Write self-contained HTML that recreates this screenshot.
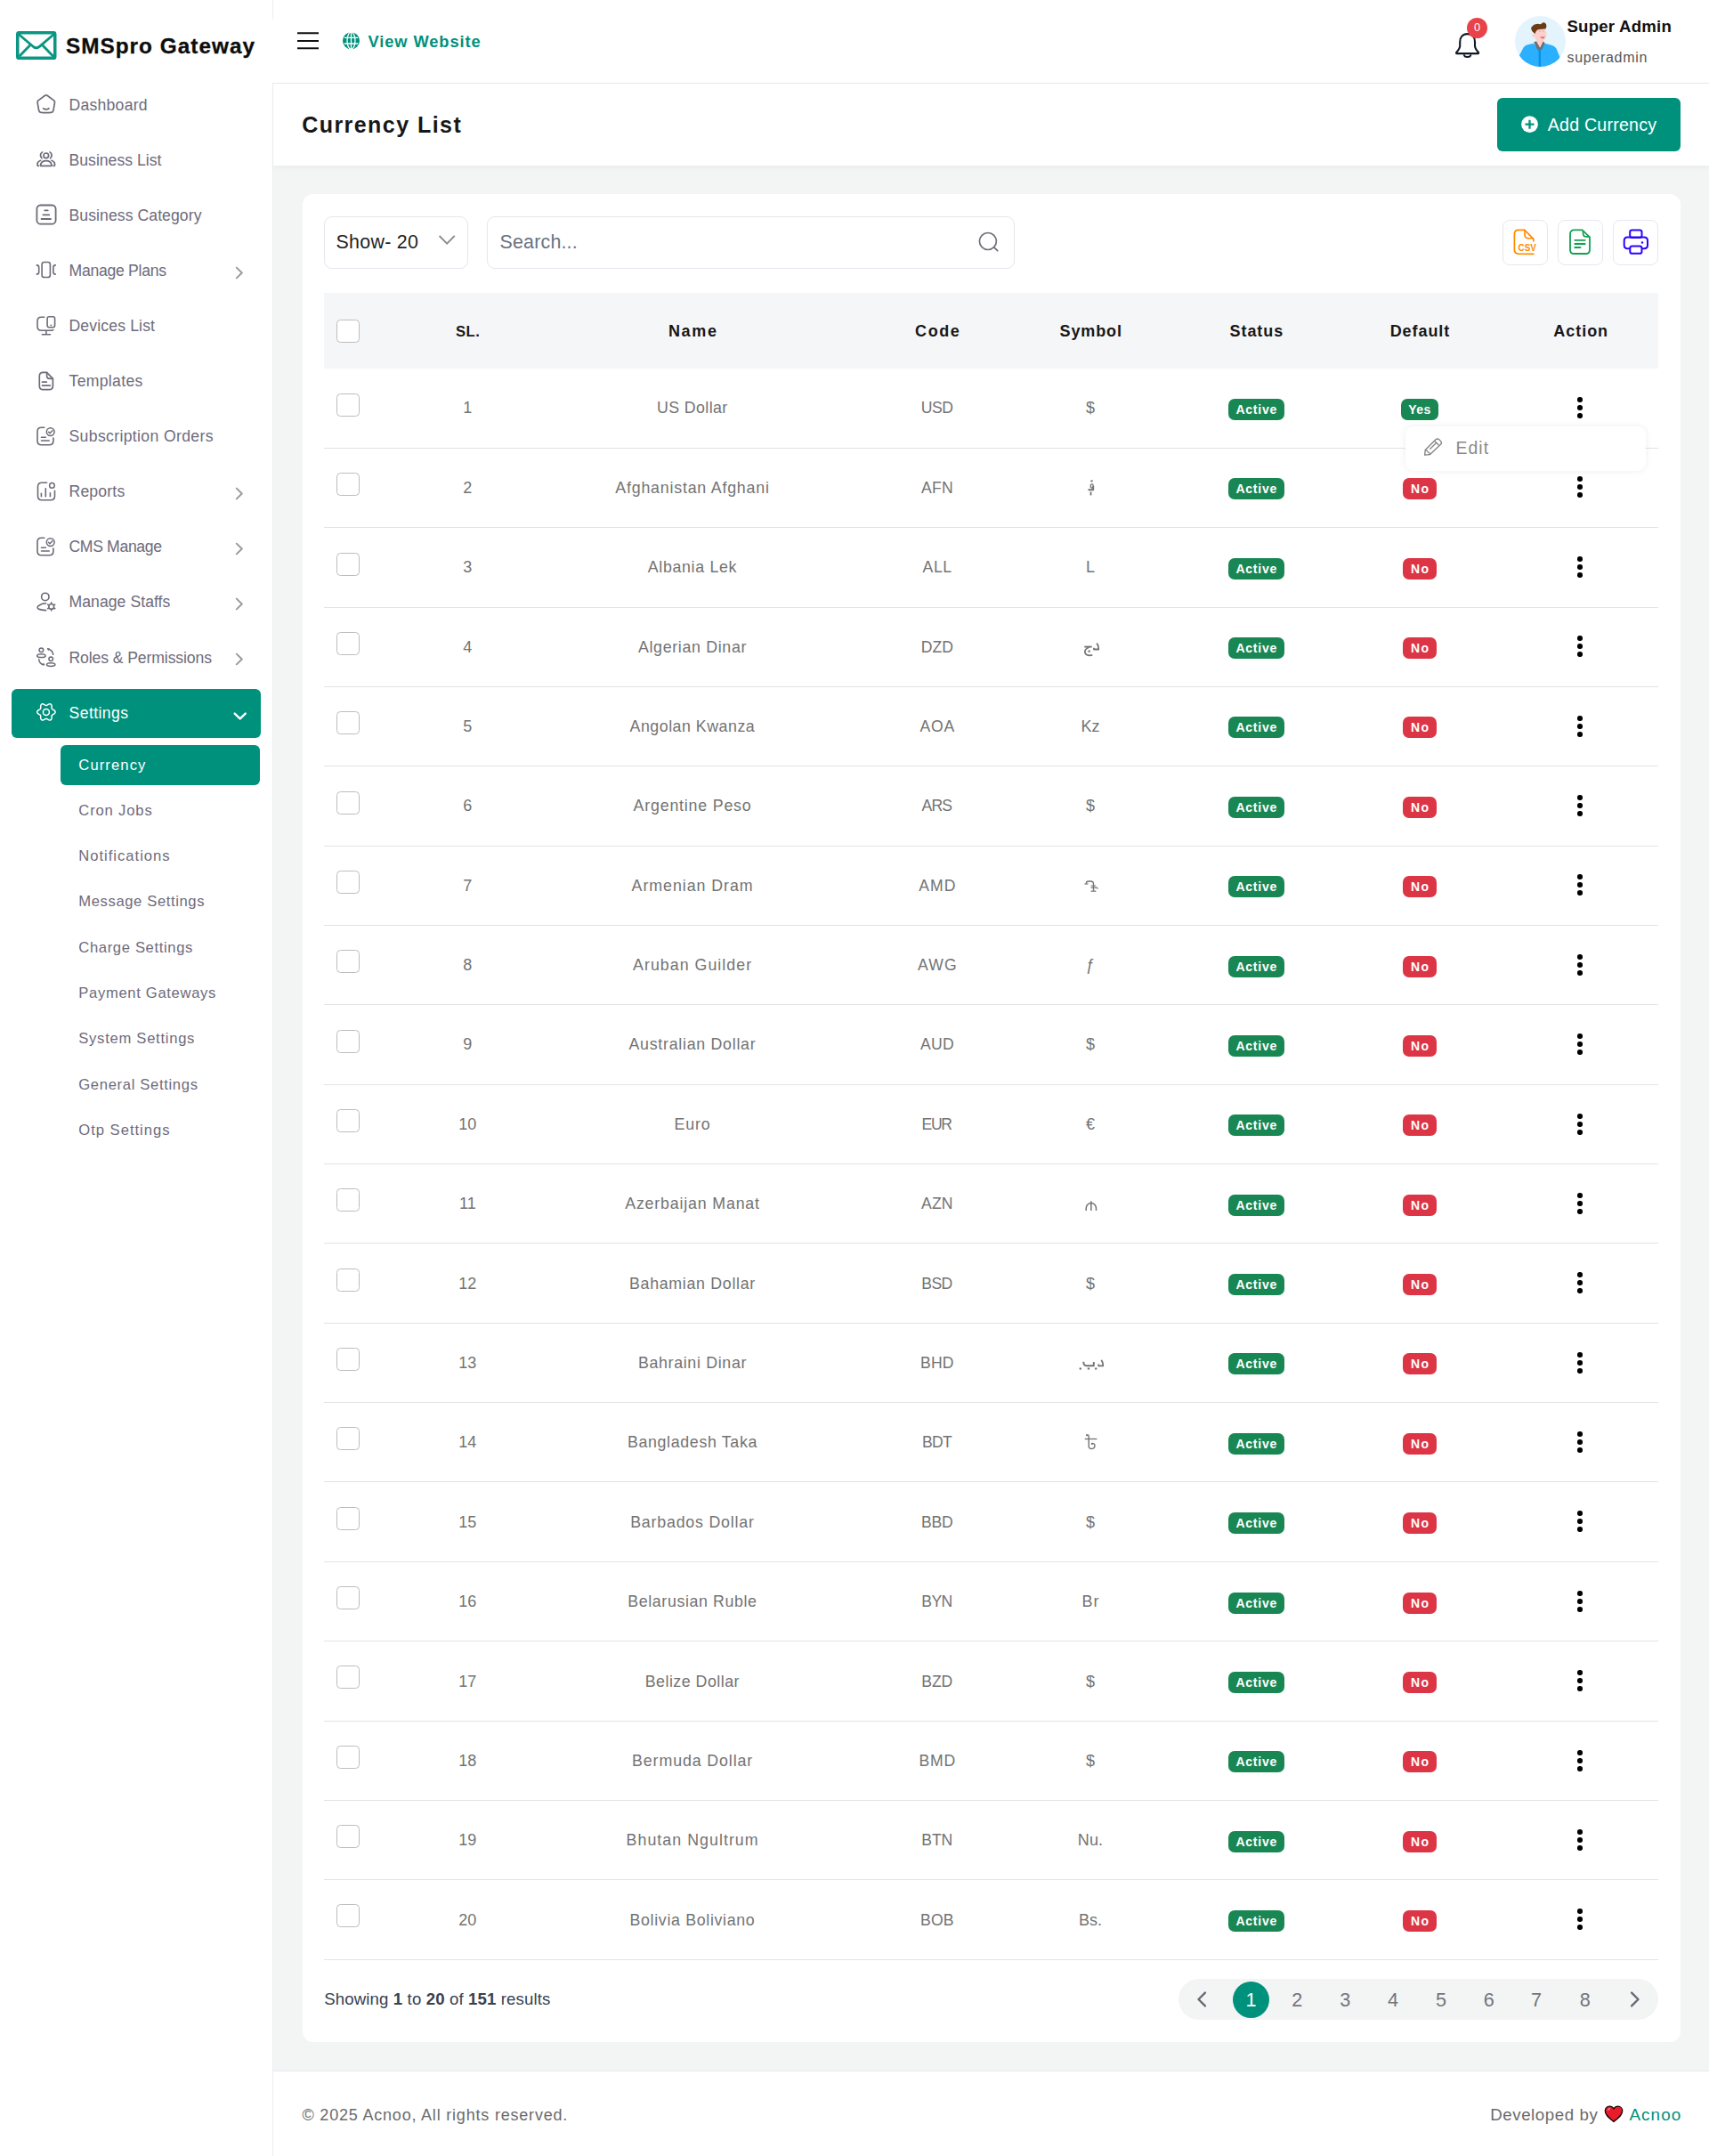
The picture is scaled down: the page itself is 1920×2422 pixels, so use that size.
<!DOCTYPE html>
<html lang="en"><head><meta charset="utf-8"><title>Currency List</title>
<style>
*{box-sizing:border-box;margin:0;padding:0}
html,body{width:1920px;height:2422px;overflow:hidden}
body{position:relative;background:#f3f5f4;font-family:"Liberation Sans",sans-serif;color:#737373;font-size:18px}
.b,.t,.cb,.dots,svg{position:absolute;display:block}
.t{white-space:nowrap}
.cb{border:1px solid #bdbdbd;border-radius:4.5px;background:#fff}
.dots{border-radius:50%;background:#000;box-shadow:0 9px 0 #000,0 18px 0 #000}

</style></head>
<body>
<div class="b" style="left:0px;top:0px;width:307px;height:2422px;background:#fff;border-right:1px solid #eceef3"></div><div class="b" style="left:306px;top:22px;width:1614px;height:72px;background:#fff;border-bottom:1px solid #e6e8ee"></div><div class="b" style="left:307px;top:0px;width:1613px;height:22px;background:#fff"></div><div class="b" style="left:307px;top:94px;width:1613px;height:92px;background:#fff;box-shadow:0 3px 5px rgba(0,0,0,0.035)"></div><div class="b" style="left:340px;top:218px;width:1548px;height:2076px;background:#fff;border-radius:12px"></div><div class="b" style="left:307px;top:2326px;width:1613px;height:96px;background:#fff;border-top:1px solid #e6e8ee"></div>
<svg style="left:18px;top:35px" width="46" height="33" viewBox="0 0 46 33" fill="none" ><rect x="1.75" y="1.75" width="42" height="28.5" rx="1.6" stroke="#0b9683" stroke-width="3.5"/><path d="M3 3.5 L19.5 17.5 Q22.7 20 26 17.5 L42.5 3.5 M3.5 28.5 L16.5 15 M42 28.5 L29 15" stroke="#0b9683" stroke-width="2.9"/></svg><span class="t" style="left:73.9px;top:34.5px;font-size:24.3px;line-height:34px;letter-spacing:1.05px;font-weight:bold;color:#0d0d0d;-webkit-text-stroke:0.3px #0d0d0d;">SMSpro Gateway</span><svg style="left:40px;top:105px" width="24" height="24" viewBox="0 0 24 24" fill="none" ><path d="M10.6 2.3 Q11.8 1.4 13 2.3 L20.6 7.9 Q21.7 8.8 21.5 10.1 L19.9 19.3 Q19.5 21.2 17.5 21.3 Q11.8 21.8 6.1 21.3 Q4.1 21.2 3.7 19.3 L2.1 10.1 Q1.9 8.8 3 7.9 Z" stroke="#6d6b77" stroke-width="1.7" stroke-linecap="round" stroke-linejoin="round" /><path d="M8.6 16.8 Q11.8 19.1 15 16.8" stroke="#6d6b77" stroke-width="1.7" stroke-linecap="round" stroke-linejoin="round" /></svg><span class="t" style="left:77.5px;top:105.6px;font-size:17.6px;line-height:25px;letter-spacing:0.25px;color:#6e6b7b;">Dashboard</span>
<svg style="left:40px;top:166px" width="24" height="24" viewBox="0 0 24 24" fill="none" ><circle cx="11.8" cy="8.8" r="2.8" stroke="#6d6b77" stroke-width="1.7"/><path d="M6.5 20.4 Q5.3 20.4 5.5 19.2 Q6.6 14.6 11.8 14.6 Q17 14.6 18.1 19.2 Q18.300 20.4 17.1 20.4 Z" stroke="#6d6b77" stroke-width="1.7" stroke-linecap="round" stroke-linejoin="round" /><path d="M7.6 4.9 Q3.6 7.6 7 11.8" stroke="#6d6b77" stroke-width="1.7" stroke-linecap="round" stroke-linejoin="round" /><path d="M16 4.9 Q20 7.6 16.6 11.8" stroke="#6d6b77" stroke-width="1.7" stroke-linecap="round" stroke-linejoin="round" /><path d="M5.6 14.3 Q1.4 16 2.1 19.6 Q2.4 20.4 3.400 20.3" stroke="#6d6b77" stroke-width="1.7" stroke-linecap="round" stroke-linejoin="round" /><path d="M18 14.3 Q22.2 16 21.5 19.6 Q21.2 20.4 20.200 20.3" stroke="#6d6b77" stroke-width="1.7" stroke-linecap="round" stroke-linejoin="round" /></svg><span class="t" style="left:77.5px;top:167.7px;font-size:17.6px;line-height:25px;letter-spacing:0.02px;color:#6e6b7b;">Business List</span>
<svg style="left:40px;top:228.6px" width="24" height="24" viewBox="0 0 24 24" fill="none" ><rect x="1.4" y="1.5" width="21.2" height="21.200" rx="4.3" stroke="#6d6b77" stroke-width="1.8"/><path d="M10.3 7.4 H13.7" stroke="#6d6b77" stroke-width="1.8" stroke-linecap="round" stroke-linejoin="round" /><path d="M8.4 12.3 H15.3" stroke="#6d6b77" stroke-width="1.8" stroke-linecap="round" stroke-linejoin="round" /><path d="M6.5 17 H17" stroke="#6d6b77" stroke-width="1.8" stroke-linecap="round" stroke-linejoin="round" /></svg><span class="t" style="left:77.5px;top:229.8px;font-size:17.6px;line-height:25px;letter-spacing:0.08px;color:#6e6b7b;">Business Category</span>
<svg style="left:40px;top:290.5px" width="24" height="24" viewBox="0 0 24 24" fill="none" ><rect x="7.1" y="3.5" width="9.3" height="17" rx="2.6" stroke="#6d6b77" stroke-width="1.6"/><path d="M1.3 6.9 Q3.7 6.9 3.7 9.5 V14.5 Q3.7 17.1 1.3 17.1" stroke="#6d6b77" stroke-width="1.6" stroke-linecap="round" stroke-linejoin="round" /><path d="M22.3 6.9 Q19.9 6.9 19.9 9.5 V14.5 Q19.9 17.1 22.3 17.1" stroke="#6d6b77" stroke-width="1.6" stroke-linecap="round" stroke-linejoin="round" /></svg><span class="t" style="left:77.5px;top:291.9px;font-size:17.6px;line-height:25px;letter-spacing:-0.27px;color:#6e6b7b;">Manage Plans</span><svg style="left:263.5px;top:299px" width="10" height="15" viewBox="0 0 10 15" fill="none" ><path d="M1.800 1.600 L7.800 7.500 L1.800 13.400" stroke="#9b99a3" stroke-width="2" stroke-linecap="round" stroke-linejoin="round" /></svg>
<svg style="left:40px;top:353.7px" width="24" height="24" viewBox="0 0 24 24" fill="none" ><path d="M9.8 2.2 H6.5 Q2 2.2 2 6.7 V12.8 Q2 17.3 6.5 17.3 H16 Q18.8 17.3 19.8 16.6" stroke="#6d6b77" stroke-width="1.6" stroke-linecap="round" stroke-linejoin="round" /><path d="M11.9 17.5 V21.6 M7.3 21.8 H16.5" stroke="#6d6b77" stroke-width="1.6" stroke-linecap="round" stroke-linejoin="round" /><rect x="13.1" y="1.8" width="8.5" height="12" rx="2.2" stroke="#6d6b77" stroke-width="1.6"/><circle cx="17.3" cy="11.4" r="0.95" fill="#6d6b77"/></svg><span class="t" style="left:77.5px;top:354.0px;font-size:17.6px;line-height:25px;letter-spacing:0.15px;color:#6e6b7b;">Devices List</span>
<svg style="left:40px;top:415.65px" width="24" height="24" viewBox="0 0 24 24" fill="none" ><path d="M12.5 2.3 H8.5 Q4.300 2.3 4.300 6.5 V17.5 Q4.300 21.7 8.5 21.7 H15.200 Q19.4 21.7 19.4 17.5 V9.4 Z" stroke="#6d6b77" stroke-width="1.7" stroke-linecap="round" stroke-linejoin="round" /><path d="M12.600 2.500 V6.3 Q12.600 9.4 15.700 9.4 H19.2" stroke="#6d6b77" stroke-width="1.6" stroke-linecap="round" stroke-linejoin="round" /><path d="M7.5 13.2 H12.3 M7.5 17.1 H16.3" stroke="#6d6b77" stroke-width="1.7" stroke-linecap="round" stroke-linejoin="round" /></svg><span class="t" style="left:77.5px;top:416.1px;font-size:17.6px;line-height:25px;letter-spacing:0.33px;color:#6e6b7b;">Templates</span>
<svg style="left:40px;top:477.65px" width="24" height="24" viewBox="0 0 24 24" fill="none" ><path d="M9.8 2.2 H6.5 Q2 2.2 2 6.7 V17.2 Q2 21.700 6.5 21.700 H15.4 Q19.9 21.700 19.9 17.2 V14" stroke="#6d6b77" stroke-width="1.6" stroke-linecap="round" stroke-linejoin="round" /><circle cx="16.7" cy="7.1" r="4.4" stroke="#6d6b77" stroke-width="1.5"/><path d="M14.5 7.3 L16 8.8 L18.9 5.7" stroke="#6d6b77" stroke-width="1.5" stroke-linecap="round" stroke-linejoin="round" /><path d="M6.5 13.2 H11.3 M6.5 17 H15.2" stroke="#6d6b77" stroke-width="1.6" stroke-linecap="round" stroke-linejoin="round" /></svg><span class="t" style="left:77.5px;top:478.1px;font-size:17.6px;line-height:25px;letter-spacing:0.36px;color:#6e6b7b;">Subscription Orders</span>
<svg style="left:40px;top:539.8px" width="24" height="24" viewBox="0 0 24 24" fill="none" ><path d="M12.6 2.3 H7 Q2.5 2.3 2.5 6.800 V17.3 Q2.5 21.8 7 21.8 H17 Q21.500 21.8 21.500 17.3 V11.3" stroke="#6d6b77" stroke-width="1.6" stroke-linecap="round" stroke-linejoin="round" /><circle cx="18.400" cy="5.4" r="2.800" stroke="#6d6b77" stroke-width="1.5"/><path d="M6.4 14.3 V17.7 M11.300 8.800 V17.7 M16.400 13.8 V17.7" stroke="#6d6b77" stroke-width="1.6" stroke-linecap="round" stroke-linejoin="round" /></svg><span class="t" style="left:77.5px;top:540.2px;font-size:17.6px;line-height:25px;letter-spacing:0.19px;color:#6e6b7b;">Reports</span><svg style="left:263.5px;top:547px" width="10" height="15" viewBox="0 0 10 15" fill="none" ><path d="M1.800 1.600 L7.800 7.500 L1.800 13.400" stroke="#9b99a3" stroke-width="2" stroke-linecap="round" stroke-linejoin="round" /></svg>
<svg style="left:40px;top:601.85px" width="24" height="24" viewBox="0 0 24 24" fill="none" ><path d="M9.8 2.2 H6.5 Q2 2.2 2 6.7 V17.2 Q2 21.700 6.5 21.700 H15.4 Q19.9 21.700 19.9 17.2 V14" stroke="#6d6b77" stroke-width="1.6" stroke-linecap="round" stroke-linejoin="round" /><circle cx="16.7" cy="7.1" r="4.4" stroke="#6d6b77" stroke-width="1.5"/><path d="M14.5 7.3 L16 8.8 L18.9 5.7" stroke="#6d6b77" stroke-width="1.5" stroke-linecap="round" stroke-linejoin="round" /><path d="M6.5 13.2 H11.3 M6.5 17 H15.2" stroke="#6d6b77" stroke-width="1.6" stroke-linecap="round" stroke-linejoin="round" /></svg><span class="t" style="left:77.5px;top:602.3px;font-size:17.6px;line-height:25px;letter-spacing:-0.34px;color:#6e6b7b;">CMS Manage</span><svg style="left:263.5px;top:609px" width="10" height="15" viewBox="0 0 10 15" fill="none" ><path d="M1.800 1.600 L7.800 7.500 L1.800 13.400" stroke="#9b99a3" stroke-width="2" stroke-linecap="round" stroke-linejoin="round" /></svg>
<svg style="left:40px;top:663.9px" width="24" height="24" viewBox="0 0 24 24" fill="none" ><circle cx="10.8" cy="6.4" r="4.2" stroke="#6d6b77" stroke-width="1.6"/><path d="M11.600 13.700 Q6.5 13.700 2.8 16.9 Q1.2 18.600 3.2 20 Q6 21.600 11.700 21.600" stroke="#6d6b77" stroke-width="1.6" stroke-linecap="round" stroke-linejoin="round" /><circle cx="17.7" cy="17.4" r="2.9" stroke="#6d6b77" stroke-width="1.5"/><path d="M17.7 12.7 V14.2 M17.7 20.6 V22.1 M13.600 15.05 L14.900 15.8 M20.5 19 L21.800 19.75 M13.600 19.75 L14.900 19 M20.5 15.8 L21.800 15.05" stroke="#6d6b77" stroke-width="1.5" stroke-linecap="round" stroke-linejoin="round" /></svg><span class="t" style="left:77.5px;top:664.4px;font-size:17.6px;line-height:25px;letter-spacing:0.06px;color:#6e6b7b;">Manage Staffs</span><svg style="left:263.5px;top:671px" width="10" height="15" viewBox="0 0 10 15" fill="none" ><path d="M1.800 1.600 L7.800 7.500 L1.800 13.400" stroke="#9b99a3" stroke-width="2" stroke-linecap="round" stroke-linejoin="round" /></svg>
<svg style="left:40px;top:725.8px" width="24" height="24" viewBox="0 0 24 24" fill="none" ><circle cx="6.4" cy="4.300" r="2.300" stroke="#6d6b77" stroke-width="1.5"/><ellipse cx="6.4" cy="10.700" rx="4.700" ry="1.900" stroke="#6d6b77" stroke-width="1.5"/><circle cx="17.200" cy="14.200" r="2.300" stroke="#6d6b77" stroke-width="1.5"/><ellipse cx="17.200" cy="20.600" rx="4.700" ry="1.900" stroke="#6d6b77" stroke-width="1.5"/><path d="M19.700 9.300 Q19 4 13.800 2.900" stroke="#6d6b77" stroke-width="1.5" stroke-linecap="round" stroke-linejoin="round" /><path d="M12.9 2.1 L16 2.600 L14.200 5.2 Z" fill="#6d6b77"/><path d="M3.700 14.800 Q4.200 19.700 9 20.700" stroke="#6d6b77" stroke-width="1.5" stroke-linecap="round" stroke-linejoin="round" /><path d="M10.500 21.300 L7.400 21.200 L8.900 18.400 Z" fill="#6d6b77"/></svg><span class="t" style="left:77.5px;top:726.5px;font-size:17.6px;line-height:25px;letter-spacing:-0.10px;color:#6e6b7b;">Roles &amp; Permissions</span><svg style="left:263.5px;top:733px" width="10" height="15" viewBox="0 0 10 15" fill="none" ><path d="M1.800 1.600 L7.800 7.500 L1.800 13.400" stroke="#9b99a3" stroke-width="2" stroke-linecap="round" stroke-linejoin="round" /></svg>
<div class="b" style="left:13px;top:774px;width:280px;height:55px;background:#00917d;border-radius:6px"></div><svg style="left:40px;top:788px" width="24" height="24" viewBox="0 0 24 24" fill="none" ><path d="M22.10 11.90 L21.97 12.56 L21.61 13.18 L21.06 13.72 L20.40 14.18 L19.73 14.56 L19.12 14.89 L18.63 15.22 L18.31 15.60 L18.14 16.07 L18.10 16.65 L18.11 17.35 L18.12 18.12 L18.06 18.92 L17.86 19.67 L17.51 20.29 L17.00 20.73 L16.36 20.95 L15.65 20.94 L14.90 20.74 L14.18 20.40 L13.51 20.01 L12.92 19.64 L12.39 19.39 L11.90 19.30 L11.41 19.39 L10.88 19.64 L10.29 20.01 L9.62 20.40 L8.90 20.74 L8.15 20.94 L7.44 20.95 L6.80 20.73 L6.29 20.29 L5.94 19.67 L5.74 18.92 L5.68 18.12 L5.69 17.35 L5.70 16.65 L5.66 16.07 L5.49 15.60 L5.17 15.22 L4.68 14.89 L4.07 14.56 L3.40 14.18 L2.74 13.72 L2.19 13.18 L1.83 12.56 L1.70 11.90 L1.83 11.24 L2.19 10.62 L2.74 10.08 L3.40 9.62 L4.07 9.24 L4.68 8.91 L5.17 8.58 L5.49 8.20 L5.66 7.73 L5.70 7.15 L5.69 6.45 L5.68 5.68 L5.74 4.88 L5.94 4.13 L6.29 3.51 L6.80 3.07 L7.44 2.85 L8.15 2.86 L8.90 3.06 L9.62 3.40 L10.29 3.79 L10.88 4.16 L11.41 4.41 L11.90 4.50 L12.39 4.41 L12.92 4.16 L13.51 3.79 L14.18 3.40 L14.90 3.06 L15.65 2.86 L16.36 2.85 L17.00 3.07 L17.51 3.51 L17.86 4.13 L18.06 4.88 L18.12 5.68 L18.11 6.45 L18.10 7.15 L18.14 7.73 L18.31 8.20 L18.63 8.58 L19.12 8.91 L19.73 9.24 L20.40 9.62 L21.06 10.08 L21.61 10.62 L21.97 11.24 Z" stroke="#fff" stroke-width="1.5" stroke-linecap="round" stroke-linejoin="round" /><circle cx="11.9" cy="11.9" r="3.500" stroke="#fff" stroke-width="1.5"/></svg><span class="t" style="left:77.5px;top:788.8px;font-size:17.6px;line-height:25px;letter-spacing:0.43px;color:#fff;">Settings</span><svg style="left:262.3px;top:800px" width="16" height="10" viewBox="0 0 16 10" fill="none" ><path d="M1.700 1.600 L7.700 7.400 L13.700 1.600" stroke="#fff" stroke-width="2.4" stroke-linecap="round" stroke-linejoin="round" /></svg><div class="b" style="left:68px;top:837px;width:224px;height:45px;background:#00917d;border-radius:6px"></div><span class="t" style="left:88.3px;top:847.8px;font-size:16.6px;line-height:23px;letter-spacing:1.11px;color:#fff;">Currency</span><span class="t" style="left:88.3px;top:898.9px;font-size:16.6px;line-height:23px;letter-spacing:0.85px;color:#6e6b7b;">Cron Jobs</span><span class="t" style="left:88.3px;top:950.2px;font-size:16.6px;line-height:23px;letter-spacing:0.99px;color:#6e6b7b;">Notifications</span><span class="t" style="left:88.3px;top:1001.4px;font-size:16.6px;line-height:23px;letter-spacing:0.62px;color:#6e6b7b;">Message Settings</span><span class="t" style="left:88.3px;top:1052.7px;font-size:16.6px;line-height:23px;letter-spacing:0.65px;color:#6e6b7b;">Charge Settings</span><span class="t" style="left:88.3px;top:1104.0px;font-size:16.6px;line-height:23px;letter-spacing:0.68px;color:#6e6b7b;">Payment Gateways</span><span class="t" style="left:88.3px;top:1155.2px;font-size:16.6px;line-height:23px;letter-spacing:0.73px;color:#6e6b7b;">System Settings</span><span class="t" style="left:88.3px;top:1206.5px;font-size:16.6px;line-height:23px;letter-spacing:0.67px;color:#6e6b7b;">General Settings</span><span class="t" style="left:88.3px;top:1257.8px;font-size:16.6px;line-height:23px;letter-spacing:0.99px;color:#6e6b7b;">Otp Settings</span>
<svg style="left:334px;top:36px" width="24" height="20" viewBox="0 0 24 20" fill="none" ><path d="M0 1.3H24M0 10H24M0 18.200H24" stroke="#111" stroke-width="2"/></svg><svg style="left:385px;top:36px" width="20" height="20" viewBox="0 0 20 20" fill="none" ><circle cx="9.5" cy="9.700" r="9.500" fill="#00917d"/><path d="M9.500 0.200V19.200M1.800 6.400H17.200M1.800 13H17.200" stroke="#fff" stroke-width="1.300"/><ellipse cx="9.500" cy="9.700" rx="4.500" ry="9.500" stroke="#fff" stroke-width="1.300"/></svg><span class="t" style="left:413.6px;top:33.8px;font-size:18.3px;line-height:26px;letter-spacing:0.89px;font-weight:bold;color:#00917d;">View Website</span><svg style="left:1634px;top:36px" width="30" height="30" viewBox="0 0 30 30" fill="none" ><path d="M14.600 2.100 C9.200 2.100 6.200 6 6.200 11 V15.500 C6.200 18.500 4.200 20.600 2.200 22.900 Q1.600 24.100 3 24.100 H26.200 Q27.600 24.100 27 22.900 C25 20.600 23 18.500 23 15.500 V11 C23 6 20 2.100 14.600 2.100 Z" stroke="#111827" stroke-width="2.100" stroke-linejoin="round"/><path d="M10.700 25.300 C11.300 28.900 17.900 28.900 18.500 25.300" stroke="#111827" stroke-width="2"/></svg><div class="b" style="left:1648px;top:20px;width:23px;height:23px;background:#e8424a;border-radius:50%"></div><span class="t" style="left:1656.1px;top:21.8px;font-size:12.8px;line-height:18px;color:#fff;">0</span><svg style="left:1702px;top:18px" width="57" height="57" viewBox="0 0 57 57" fill="none" ><defs><clipPath id="avc"><circle cx="28.500" cy="28.500" r="28.500"/></clipPath></defs><g clip-path="url(#avc)"><rect width="57" height="57" fill="#e3f4fd"/><path d="M4 46 L9.500 35.500 Q11 33 14 32.300 L21 30.700 L28 38 L33.800 30.800 L42 33 Q45 34 46.500 36.500 L51 47.500 L51 58 L4 58 Z" fill="#2bb0ff"/><path d="M26.600 35 H29 V58 H26.600 Z" fill="#0b8fe6"/><path d="M24 25 L24.300 30 L27.800 36.500 L32 30.500 L31.500 25 Z" fill="#fdd0cb"/><path d="M21.200 29.300 L24 28.300 L28.300 36 L28.200 38.300 L25.600 38.600 Z" fill="#6f6f70"/><path d="M31.700 28.300 L33.700 30.400 L30.200 37.800 L28.300 38.300 L28.300 35.600 Z" fill="#6f6f70"/><ellipse cx="28.600" cy="21" rx="6.900" ry="8" fill="#fdd0cb"/><circle cx="21" cy="21.800" r="1.900" fill="#fdd0cb"/><path d="M28.300 23 Q31 24 33.700 22.800 Q33 25.600 30.800 25.500 Q28.800 25.300 28.300 23 Z" fill="#e8636c"/><circle cx="28" cy="17.300" r="0.700" fill="#b9a9b0"/><circle cx="32" cy="17.300" r="0.700" fill="#b9a9b0"/><path d="M21.800 19.600 Q18.800 17.500 18.200 14.500 Q17.600 12.500 19.800 11.300 Q20.600 9.500 23 9.200 Q25.500 8.300 28.300 9.300 Q29.500 9.200 30.400 8 Q31.600 6.800 33.400 7.600 Q35.500 8.700 35.400 11 Q35.400 13.300 34.300 14.600 Q30.500 14.500 27 15 Q24.500 15.500 23.700 17.300 Q22.900 18.500 22.700 19.800 Z" fill="#6a3b14"/></g></svg><span class="t" style="left:1760.4px;top:16.7px;font-size:18.6px;line-height:26px;letter-spacing:0.24px;font-weight:bold;color:#111;">Super Admin</span><span class="t" style="left:1760.5px;top:53.5px;font-size:16px;line-height:22px;letter-spacing:0.69px;color:#555;">superadmin</span>
<span class="t" style="left:339.2px;top:122.7px;font-size:25px;line-height:35px;letter-spacing:1.45px;font-weight:bold;color:#171717;">Currency List</span><div class="b" style="left:1682px;top:110px;width:206px;height:60px;background:#00917d;border-radius:6px"></div><svg style="left:1709px;top:130px" width="20" height="20" viewBox="0 0 20 20" fill="none" ><circle cx="9.500" cy="9.700" r="9.400" fill="#fff"/><path d="M9.500 4.700V14.700M4.500 9.700H14.500" stroke="#00917d" stroke-width="2.300"/></svg><span class="t" style="left:1738.8px;top:126.5px;font-size:19.6px;line-height:27px;letter-spacing:0.22px;color:#fff;">Add Currency</span>
<div class="b" style="left:364px;top:243px;width:162px;height:59px;border:1px solid #e4e7ec;border-radius:9px"></div><span class="t" style="left:377.5px;top:257.4px;font-size:21.4px;line-height:30px;letter-spacing:0.29px;color:#1f1f1f;">Show- 20</span><svg style="left:492.6px;top:264px" width="20" height="12" viewBox="0 0 20 12" fill="none" ><path d="M0.600 0.900 L9.200 9.700 L17.800 0.900" stroke="#8c8c8c" stroke-width="1.900" fill="none"/></svg><div class="b" style="left:547px;top:243px;width:593.2px;height:59px;border:1px solid #e4e7ec;border-radius:9px"></div><span class="t" style="left:561.5px;top:257.4px;font-size:21.4px;line-height:30px;letter-spacing:0.20px;color:#6b7280;">Search...</span><svg style="left:1098px;top:260px" width="26" height="26" viewBox="0 0 26 26" fill="none" ><circle cx="11.900" cy="11" r="9.500" stroke="#6e7079" stroke-width="1.700"/><path d="M18.800 17.900 L22.700 21.700" stroke="#6e7079" stroke-width="1.800" stroke-linecap="round"/></svg><div class="b" style="left:1688.3px;top:247.3px;width:50.3px;height:50.3px;border:1px solid #e6e8ef;border-radius:8px"></div><svg style="left:1698px;top:257.2px" width="32" height="32" viewBox="0 0 32 32" fill="none" overflow="visible"><path d="M14.500 1.300 H8 Q3.400 1.300 3.400 5.900 V23.500 Q3.400 28 8 28.200 L24.800 28.300" stroke="#ff8a00" stroke-width="1.7" stroke-linecap="round" stroke-linejoin="round" /><path d="M14.800 1.400 L24.800 11.300 V13.800" stroke="#ff8a00" stroke-width="1.7" stroke-linecap="round" stroke-linejoin="round" /><path d="M15 1.800 V6.500 Q15 10.800 19.300 10.800 H24.300" stroke="#ff8a00" stroke-width="1.6" stroke-linecap="round" stroke-linejoin="round" /><text x="7.500" y="24.6" font-family="Liberation Sans, sans-serif" font-weight="bold" font-size="11.2" fill="#ff8a00" textLength="20.300" lengthAdjust="spacingAndGlyphs">CSV</text></svg><div class="b" style="left:1750.3px;top:247.3px;width:50.3px;height:50.3px;border:1px solid #e6e8ef;border-radius:8px"></div><svg style="left:1760px;top:257.2px" width="32" height="32" viewBox="0 0 32 32" fill="none" ><path d="M17.500 1.400 H8.600 Q4 1.400 4 6 V23.400 Q4 28 8.600 28 H21.400 Q26 28 26 23.400 V9.300 Z" stroke="#12a150" stroke-width="1.8" stroke-linecap="round" stroke-linejoin="round" /><path d="M18.600 2.300 V5.500 Q18.600 8.800 21.900 8.800 H25.300" stroke="#12a150" stroke-width="1.8" stroke-linecap="round" stroke-linejoin="round" /><path d="M9.300 12.800 H20.700 M9.300 17 H20.700 M9.300 21 H15.500" stroke="#12a150" stroke-width="1.8" stroke-linecap="round" stroke-linejoin="round" /></svg><div class="b" style="left:1812.3px;top:247.3px;width:50.3px;height:50.3px;border:1px solid #e6e8ef;border-radius:8px"></div><svg style="left:1822px;top:257.2px" width="32" height="32" viewBox="0 0 32 32" fill="none" ><rect x="9.200" y="1.500" width="13.300" height="8.500" rx="2.300" stroke="#2b05ff" stroke-width="2"/><path d="M9 22.300 H6.500 Q2.700 22.300 2.700 18.500 V13.500 Q2.700 9.500 6.500 9.500 H25 Q29 9.500 29 13.500 V18.500 Q29 22.300 25 22.300 H22.700" stroke="#2b05ff" stroke-width="2"/><rect x="9.300" y="19.500" width="13.200" height="8.300" rx="2.400" stroke="#2b05ff" stroke-width="2" fill="#fff"/><circle cx="23" cy="15.500" r="1.200" fill="#2b05ff"/></svg>
<div class="b" style="left:364px;top:329px;width:1499px;height:84.6px;background:#f5f6f8"></div><div class="cb" style="left:378px;top:359px;width:26px;height:26px;"></div><span class="t" style="left:511.9px;top:360.9px;font-size:16.6px;line-height:23px;letter-spacing:0.53px;font-weight:bold;color:#171717;">SL.</span><span class="t" style="left:750.9px;top:359.9px;font-size:18px;line-height:25px;letter-spacing:1.73px;font-weight:bold;color:#171717;">Name</span><span class="t" style="left:1028.1px;top:359.9px;font-size:18px;line-height:25px;letter-spacing:1.57px;font-weight:bold;color:#171717;">Code</span><span class="t" style="left:1190.5px;top:359.9px;font-size:18px;line-height:25px;letter-spacing:0.88px;font-weight:bold;color:#171717;">Symbol</span><span class="t" style="left:1381.6px;top:359.9px;font-size:18px;line-height:25px;letter-spacing:0.92px;font-weight:bold;color:#171717;">Status</span><span class="t" style="left:1561.7px;top:359.9px;font-size:18px;line-height:25px;letter-spacing:0.92px;font-weight:bold;color:#171717;">Default</span><span class="t" style="left:1745.3px;top:359.9px;font-size:18px;line-height:25px;letter-spacing:0.96px;font-weight:bold;color:#171717;">Action</span>
<div class="b" style="left:364px;top:503px;width:1499px;height:1px;background:#e3e3e3"></div><div class="cb" style="left:378px;top:442px;width:26px;height:25.5px;"></div><span class="t" style="left:520.3px;top:446.4px;font-size:18px;line-height:25px;color:#737373;">1</span><span class="t" style="left:738.1px;top:446.4px;font-size:17.8px;line-height:25px;letter-spacing:0.38px;color:#737373;">US Dollar</span><span class="t" style="left:1034.7px;top:446.4px;font-size:17.6px;line-height:25px;letter-spacing:-0.49px;color:#737373;">USD</span><span class="t" style="left:1220.0px;top:446.4px;font-size:18px;line-height:25px;color:#737373;">$</span><div class="b" style="left:1380px;top:448px;width:63px;height:24px;background:#198754;border-radius:7px"></div><span class="t" style="left:1388.4px;top:450.3px;font-size:14px;line-height:20px;letter-spacing:0.79px;font-weight:bold;color:#fff;">Active</span><div class="b" style="left:1574px;top:448px;width:42px;height:24px;background:#198754;border-radius:7px"></div><span class="t" style="left:1582.3px;top:450.3px;font-size:14px;line-height:20px;letter-spacing:0.41px;font-weight:bold;color:#fff;">Yes</span><div class="dots" style="left:1772.4px;top:446px;width:5.5px;height:5.5px;"></div>
<div class="b" style="left:364px;top:592px;width:1499px;height:1px;background:#e3e3e3"></div><div class="cb" style="left:378px;top:531px;width:26px;height:25.5px;"></div><span class="t" style="left:520.3px;top:535.8px;font-size:18px;line-height:25px;color:#737373;">2</span><span class="t" style="left:691.3px;top:535.8px;font-size:17.8px;line-height:25px;letter-spacing:0.80px;color:#737373;">Afghanistan Afghani</span><span class="t" style="left:1034.9px;top:535.8px;font-size:17.6px;line-height:25px;letter-spacing:0.29px;color:#737373;">AFN</span><svg style="left:1204.5px;top:533.3px" width="40" height="30" viewBox="0 0 40 30" fill="none" ><rect x="20.40" y="6.40" width="2.2" height="2" fill="#737373"/><ellipse cx="21.700" cy="13" rx="1.500" ry="2.100" stroke="#737373" stroke-width="1.300"/><path d="M23.200 13 V17.300 H17.500" stroke="#737373" stroke-width="1.9" fill="none" stroke-linecap="butt" stroke-linejoin="round"/><path d="M20.500 19.500 V23.400" stroke="#737373" stroke-width="1.8" fill="none" stroke-linecap="butt" stroke-linejoin="round"/></svg><div class="b" style="left:1380px;top:537px;width:63px;height:24px;background:#198754;border-radius:7px"></div><span class="t" style="left:1388.4px;top:539.3px;font-size:14px;line-height:20px;letter-spacing:0.79px;font-weight:bold;color:#fff;">Active</span><div class="b" style="left:1576px;top:537px;width:38px;height:24px;background:#dc3545;border-radius:7px"></div><span class="t" style="left:1585.0px;top:539.3px;font-size:14px;line-height:20px;letter-spacing:1.30px;font-weight:bold;color:#fff;">No</span><div class="dots" style="left:1772.4px;top:535px;width:5.5px;height:5.5px;"></div>
<div class="b" style="left:364px;top:682px;width:1499px;height:1px;background:#e3e3e3"></div><div class="cb" style="left:378px;top:621px;width:26px;height:25.5px;"></div><span class="t" style="left:520.3px;top:625.2px;font-size:18px;line-height:25px;color:#737373;">3</span><span class="t" style="left:727.8px;top:625.2px;font-size:17.8px;line-height:25px;letter-spacing:0.67px;color:#737373;">Albania Lek</span><span class="t" style="left:1036.6px;top:625.2px;font-size:17.6px;line-height:25px;letter-spacing:0.58px;color:#737373;">ALL</span><span class="t" style="left:1220.0px;top:625.2px;font-size:18px;line-height:25px;color:#737373;">L</span><div class="b" style="left:1380px;top:627px;width:63px;height:24px;background:#198754;border-radius:7px"></div><span class="t" style="left:1388.4px;top:629.3px;font-size:14px;line-height:20px;letter-spacing:0.79px;font-weight:bold;color:#fff;">Active</span><div class="b" style="left:1576px;top:627px;width:38px;height:24px;background:#dc3545;border-radius:7px"></div><span class="t" style="left:1585.0px;top:629.3px;font-size:14px;line-height:20px;letter-spacing:1.30px;font-weight:bold;color:#fff;">No</span><div class="dots" style="left:1772.4px;top:625px;width:5.5px;height:5.5px;"></div>
<div class="b" style="left:364px;top:771px;width:1499px;height:1px;background:#e3e3e3"></div><div class="cb" style="left:378px;top:710px;width:26px;height:25.5px;"></div><span class="t" style="left:520.3px;top:714.5px;font-size:18px;line-height:25px;color:#737373;">4</span><span class="t" style="left:716.9px;top:714.5px;font-size:17.8px;line-height:25px;letter-spacing:0.68px;color:#737373;">Algerian Dinar</span><span class="t" style="left:1034.7px;top:714.5px;font-size:17.6px;line-height:25px;letter-spacing:0.01px;color:#737373;">DZD</span><svg style="left:1204.5px;top:712.0px" width="40" height="30" viewBox="0 0 40 30" fill="none" ><path d="M27.200 10.700 Q29.300 13 29.300 17.500 H24 V15.800" stroke="#737373" stroke-width="1.8" fill="none" stroke-linecap="butt" stroke-linejoin="round"/><path d="M13.300 14.600 H21.700" stroke="#737373" stroke-width="1.9" fill="none" stroke-linecap="butt" stroke-linejoin="round"/><path d="M18.500 15.300 Q13.800 17 13.800 20.300 Q14.500 24.300 19.500 24.300 Q21 24.300 22.300 23.800" stroke="#737373" stroke-width="1.7" fill="none" stroke-linecap="butt" stroke-linejoin="round"/><rect x="17.50" y="18.50" width="2.2" height="2.2" fill="#737373"/></svg><div class="b" style="left:1380px;top:716px;width:63px;height:24px;background:#198754;border-radius:7px"></div><span class="t" style="left:1388.4px;top:718.3px;font-size:14px;line-height:20px;letter-spacing:0.79px;font-weight:bold;color:#fff;">Active</span><div class="b" style="left:1576px;top:716px;width:38px;height:24px;background:#dc3545;border-radius:7px"></div><span class="t" style="left:1585.0px;top:718.3px;font-size:14px;line-height:20px;letter-spacing:1.30px;font-weight:bold;color:#fff;">No</span><div class="dots" style="left:1772.4px;top:714px;width:5.5px;height:5.5px;"></div>
<div class="b" style="left:364px;top:860px;width:1499px;height:1px;background:#e3e3e3"></div><div class="cb" style="left:378px;top:799px;width:26px;height:25.5px;"></div><span class="t" style="left:520.3px;top:803.9px;font-size:18px;line-height:25px;color:#737373;">5</span><span class="t" style="left:707.6px;top:803.9px;font-size:17.8px;line-height:25px;letter-spacing:0.51px;color:#737373;">Angolan Kwanza</span><span class="t" style="left:1033.5px;top:803.9px;font-size:17.6px;line-height:25px;letter-spacing:0.76px;color:#737373;">AOA</span><span class="t" style="left:1214.6px;top:803.9px;font-size:18px;line-height:25px;letter-spacing:-0.19px;color:#737373;">Kz</span><div class="b" style="left:1380px;top:805px;width:63px;height:24px;background:#198754;border-radius:7px"></div><span class="t" style="left:1388.4px;top:807.3px;font-size:14px;line-height:20px;letter-spacing:0.79px;font-weight:bold;color:#fff;">Active</span><div class="b" style="left:1576px;top:805px;width:38px;height:24px;background:#dc3545;border-radius:7px"></div><span class="t" style="left:1585.0px;top:807.3px;font-size:14px;line-height:20px;letter-spacing:1.30px;font-weight:bold;color:#fff;">No</span><div class="dots" style="left:1772.4px;top:804px;width:5.5px;height:5.5px;"></div>
<div class="b" style="left:364px;top:950px;width:1499px;height:1px;background:#e3e3e3"></div><div class="cb" style="left:378px;top:889px;width:26px;height:25.5px;"></div><span class="t" style="left:520.3px;top:893.3px;font-size:18px;line-height:25px;color:#737373;">6</span><span class="t" style="left:711.6px;top:893.3px;font-size:17.8px;line-height:25px;letter-spacing:0.81px;color:#737373;">Argentine Peso</span><span class="t" style="left:1035.5px;top:893.3px;font-size:17.6px;line-height:25px;letter-spacing:-0.80px;color:#737373;">ARS</span><span class="t" style="left:1220.0px;top:893.3px;font-size:18px;line-height:25px;color:#737373;">$</span><div class="b" style="left:1380px;top:895px;width:63px;height:24px;background:#198754;border-radius:7px"></div><span class="t" style="left:1388.4px;top:897.3px;font-size:14px;line-height:20px;letter-spacing:0.79px;font-weight:bold;color:#fff;">Active</span><div class="b" style="left:1576px;top:895px;width:38px;height:24px;background:#dc3545;border-radius:7px"></div><span class="t" style="left:1585.0px;top:897.3px;font-size:14px;line-height:20px;letter-spacing:1.30px;font-weight:bold;color:#fff;">No</span><div class="dots" style="left:1772.4px;top:893px;width:5.5px;height:5.5px;"></div>
<div class="b" style="left:364px;top:1039px;width:1499px;height:1px;background:#e3e3e3"></div><div class="cb" style="left:378px;top:978px;width:26px;height:25.5px;"></div><span class="t" style="left:520.3px;top:982.7px;font-size:18px;line-height:25px;color:#737373;">7</span><span class="t" style="left:709.6px;top:982.7px;font-size:17.8px;line-height:25px;letter-spacing:0.96px;color:#737373;">Armenian Dram</span><span class="t" style="left:1032.2px;top:982.7px;font-size:17.6px;line-height:25px;letter-spacing:1.04px;color:#737373;">AMD</span><svg style="left:1204.5px;top:980.2px" width="40" height="30" viewBox="0 0 40 30" fill="none" ><path d="M13.500 13 H17.500" stroke="#737373" stroke-width="1.2" fill="none" stroke-linecap="butt" stroke-linejoin="round"/><path d="M15.200 12.700 Q15.200 10 18 10 H20.500 Q23.500 10 23.500 13 V20.800" stroke="#737373" stroke-width="1.3" fill="none" stroke-linecap="butt" stroke-linejoin="round"/><path d="M20.500 15 H26.300 M20.500 17.100 H26 Q27.500 17.100 28.600 18.300 M20.600 21.100 H26.300" stroke="#737373" stroke-width="1.2" fill="none" stroke-linecap="butt" stroke-linejoin="round"/></svg><div class="b" style="left:1380px;top:984px;width:63px;height:24px;background:#198754;border-radius:7px"></div><span class="t" style="left:1388.4px;top:986.3px;font-size:14px;line-height:20px;letter-spacing:0.79px;font-weight:bold;color:#fff;">Active</span><div class="b" style="left:1576px;top:984px;width:38px;height:24px;background:#dc3545;border-radius:7px"></div><span class="t" style="left:1585.0px;top:986.3px;font-size:14px;line-height:20px;letter-spacing:1.30px;font-weight:bold;color:#fff;">No</span><div class="dots" style="left:1772.4px;top:982px;width:5.5px;height:5.5px;"></div>
<div class="b" style="left:364px;top:1128px;width:1499px;height:1px;background:#e3e3e3"></div><div class="cb" style="left:378px;top:1067px;width:26px;height:25.5px;"></div><span class="t" style="left:520.3px;top:1072.1px;font-size:18px;line-height:25px;color:#737373;">8</span><span class="t" style="left:711.1px;top:1072.1px;font-size:17.8px;line-height:25px;letter-spacing:1.03px;color:#737373;">Aruban Guilder</span><span class="t" style="left:1031.0px;top:1072.1px;font-size:17.6px;line-height:25px;letter-spacing:1.15px;color:#737373;">AWG</span><span class="t" style="left:1220.0px;top:1072.1px;font-size:18px;line-height:25px;color:#737373;">ƒ</span><div class="b" style="left:1380px;top:1074px;width:63px;height:24px;background:#198754;border-radius:7px"></div><span class="t" style="left:1388.4px;top:1076.3px;font-size:14px;line-height:20px;letter-spacing:0.79px;font-weight:bold;color:#fff;">Active</span><div class="b" style="left:1576px;top:1074px;width:38px;height:24px;background:#dc3545;border-radius:7px"></div><span class="t" style="left:1585.0px;top:1076.3px;font-size:14px;line-height:20px;letter-spacing:1.30px;font-weight:bold;color:#fff;">No</span><div class="dots" style="left:1772.4px;top:1072px;width:5.5px;height:5.5px;"></div>
<div class="b" style="left:364px;top:1218px;width:1499px;height:1px;background:#e3e3e3"></div><div class="cb" style="left:378px;top:1157px;width:26px;height:25.5px;"></div><span class="t" style="left:520.3px;top:1161.4px;font-size:18px;line-height:25px;color:#737373;">9</span><span class="t" style="left:706.5px;top:1161.4px;font-size:17.8px;line-height:25px;letter-spacing:0.73px;color:#737373;">Australian Dollar</span><span class="t" style="left:1033.9px;top:1161.4px;font-size:17.6px;line-height:25px;letter-spacing:0.36px;color:#737373;">AUD</span><span class="t" style="left:1220.0px;top:1161.4px;font-size:18px;line-height:25px;color:#737373;">$</span><div class="b" style="left:1380px;top:1163px;width:63px;height:24px;background:#198754;border-radius:7px"></div><span class="t" style="left:1388.4px;top:1165.3px;font-size:14px;line-height:20px;letter-spacing:0.79px;font-weight:bold;color:#fff;">Active</span><div class="b" style="left:1576px;top:1163px;width:38px;height:24px;background:#dc3545;border-radius:7px"></div><span class="t" style="left:1585.0px;top:1165.3px;font-size:14px;line-height:20px;letter-spacing:1.30px;font-weight:bold;color:#fff;">No</span><div class="dots" style="left:1772.4px;top:1161px;width:5.5px;height:5.5px;"></div>
<div class="b" style="left:364px;top:1307px;width:1499px;height:1px;background:#e3e3e3"></div><div class="cb" style="left:378px;top:1246px;width:26px;height:25.5px;"></div><span class="t" style="left:515.3px;top:1250.8px;font-size:18px;line-height:25px;color:#737373;">10</span><span class="t" style="left:757.6px;top:1250.8px;font-size:17.8px;line-height:25px;letter-spacing:0.87px;color:#737373;">Euro</span><span class="t" style="left:1035.5px;top:1250.8px;font-size:17.6px;line-height:25px;letter-spacing:-1.29px;color:#737373;">EUR</span><span class="t" style="left:1220.0px;top:1250.8px;font-size:18px;line-height:25px;color:#737373;">€</span><div class="b" style="left:1380px;top:1252px;width:63px;height:24px;background:#198754;border-radius:7px"></div><span class="t" style="left:1388.4px;top:1254.3px;font-size:14px;line-height:20px;letter-spacing:0.79px;font-weight:bold;color:#fff;">Active</span><div class="b" style="left:1576px;top:1252px;width:38px;height:24px;background:#dc3545;border-radius:7px"></div><span class="t" style="left:1585.0px;top:1254.3px;font-size:14px;line-height:20px;letter-spacing:1.30px;font-weight:bold;color:#fff;">No</span><div class="dots" style="left:1772.4px;top:1251px;width:5.5px;height:5.5px;"></div>
<div class="b" style="left:364px;top:1396px;width:1499px;height:1px;background:#e3e3e3"></div><div class="cb" style="left:378px;top:1335px;width:26px;height:25.5px;"></div><span class="t" style="left:516.0px;top:1340.2px;font-size:18px;line-height:25px;color:#737373;">11</span><span class="t" style="left:702.2px;top:1340.2px;font-size:17.8px;line-height:25px;letter-spacing:0.83px;color:#737373;">Azerbaijan Manat</span><span class="t" style="left:1035.1px;top:1340.2px;font-size:17.6px;line-height:25px;letter-spacing:0.09px;color:#737373;">AZN</span><svg style="left:1204.5px;top:1337.7px" width="40" height="30" viewBox="0 0 40 30" fill="none" ><path d="M15.200 21.900 V19.500 A5.650 5.900 0 0 1 26.500 19.500 V21.900" stroke="#737373" stroke-width="1.5" fill="none" stroke-linecap="butt" stroke-linejoin="round"/><path d="M20.850 11.300 V21.900" stroke="#737373" stroke-width="1.5" fill="none" stroke-linecap="butt" stroke-linejoin="round"/></svg><div class="b" style="left:1380px;top:1342px;width:63px;height:24px;background:#198754;border-radius:7px"></div><span class="t" style="left:1388.4px;top:1344.3px;font-size:14px;line-height:20px;letter-spacing:0.79px;font-weight:bold;color:#fff;">Active</span><div class="b" style="left:1576px;top:1342px;width:38px;height:24px;background:#dc3545;border-radius:7px"></div><span class="t" style="left:1585.0px;top:1344.3px;font-size:14px;line-height:20px;letter-spacing:1.30px;font-weight:bold;color:#fff;">No</span><div class="dots" style="left:1772.4px;top:1340px;width:5.5px;height:5.5px;"></div>
<div class="b" style="left:364px;top:1486px;width:1499px;height:1px;background:#e3e3e3"></div><div class="cb" style="left:378px;top:1425px;width:26px;height:25.5px;"></div><span class="t" style="left:515.3px;top:1429.6px;font-size:18px;line-height:25px;color:#737373;">12</span><span class="t" style="left:707.0px;top:1429.6px;font-size:17.8px;line-height:25px;letter-spacing:0.70px;color:#737373;">Bahamian Dollar</span><span class="t" style="left:1035.3px;top:1429.6px;font-size:17.6px;line-height:25px;letter-spacing:-0.60px;color:#737373;">BSD</span><span class="t" style="left:1220.0px;top:1429.6px;font-size:18px;line-height:25px;color:#737373;">$</span><div class="b" style="left:1380px;top:1431px;width:63px;height:24px;background:#198754;border-radius:7px"></div><span class="t" style="left:1388.4px;top:1433.3px;font-size:14px;line-height:20px;letter-spacing:0.79px;font-weight:bold;color:#fff;">Active</span><div class="b" style="left:1576px;top:1431px;width:38px;height:24px;background:#dc3545;border-radius:7px"></div><span class="t" style="left:1585.0px;top:1433.3px;font-size:14px;line-height:20px;letter-spacing:1.30px;font-weight:bold;color:#fff;">No</span><div class="dots" style="left:1772.4px;top:1429px;width:5.5px;height:5.5px;"></div>
<div class="b" style="left:364px;top:1575px;width:1499px;height:1px;background:#e3e3e3"></div><div class="cb" style="left:378px;top:1514px;width:26px;height:25.5px;"></div><span class="t" style="left:515.3px;top:1519.0px;font-size:18px;line-height:25px;color:#737373;">13</span><span class="t" style="left:716.9px;top:1519.0px;font-size:17.8px;line-height:25px;letter-spacing:0.68px;color:#737373;">Bahraini Dinar</span><span class="t" style="left:1034.1px;top:1519.0px;font-size:17.6px;line-height:25px;letter-spacing:0.16px;color:#737373;">BHD</span><svg style="left:1204.5px;top:1516.5px" width="40" height="30" viewBox="0 0 40 30" fill="none" ><rect x="7.60" y="19.50" width="2.4" height="2" fill="#737373"/><path d="M12.300 12.800 Q12.300 17.300 15.500 17.300 H23.800 V13" stroke="#737373" stroke-width="1.9" fill="none" stroke-linecap="butt" stroke-linejoin="round"/><rect x="16.80" y="19.50" width="2.4" height="2" fill="#737373"/><rect x="25.00" y="19.50" width="2.4" height="2" fill="#737373"/><path d="M32.300 10.800 Q34.300 13 34.300 17.300 H29.200 V15.600" stroke="#737373" stroke-width="1.8" fill="none" stroke-linecap="butt" stroke-linejoin="round"/></svg><div class="b" style="left:1380px;top:1520px;width:63px;height:24px;background:#198754;border-radius:7px"></div><span class="t" style="left:1388.4px;top:1522.3px;font-size:14px;line-height:20px;letter-spacing:0.79px;font-weight:bold;color:#fff;">Active</span><div class="b" style="left:1576px;top:1520px;width:38px;height:24px;background:#dc3545;border-radius:7px"></div><span class="t" style="left:1585.0px;top:1522.3px;font-size:14px;line-height:20px;letter-spacing:1.30px;font-weight:bold;color:#fff;">No</span><div class="dots" style="left:1772.4px;top:1519px;width:5.5px;height:5.5px;"></div>
<div class="b" style="left:364px;top:1664px;width:1499px;height:1px;background:#e3e3e3"></div><div class="cb" style="left:378px;top:1603px;width:26px;height:25.5px;"></div><span class="t" style="left:515.3px;top:1608.3px;font-size:18px;line-height:25px;color:#737373;">14</span><span class="t" style="left:704.9px;top:1608.3px;font-size:17.8px;line-height:25px;letter-spacing:0.67px;color:#737373;">Bangladesh Taka</span><span class="t" style="left:1036.0px;top:1608.3px;font-size:17.6px;line-height:25px;letter-spacing:-0.76px;color:#737373;">BDT</span><svg style="left:1204.5px;top:1605.8px" width="40" height="30" viewBox="0 0 40 30" fill="none" ><path d="M15.800 6.300 Q18.200 5 18.200 8 V18.300 Q18.200 21.600 21.500 21.600 Q25 21.300 25 17.800 Q24.800 15.300 21.600 15.600" stroke="#737373" stroke-width="1.4" fill="none" stroke-linecap="butt" stroke-linejoin="round"/><rect x="15.00" y="5.40" width="1.8" height="1.8" fill="#737373"/><rect x="20.85" y="14.95" width="1.9" height="1.9" fill="#737373"/><path d="M13.700 10.500 H27.400" stroke="#737373" stroke-width="1.3" fill="none" stroke-linecap="butt" stroke-linejoin="round"/></svg><div class="b" style="left:1380px;top:1610px;width:63px;height:24px;background:#198754;border-radius:7px"></div><span class="t" style="left:1388.4px;top:1612.3px;font-size:14px;line-height:20px;letter-spacing:0.79px;font-weight:bold;color:#fff;">Active</span><div class="b" style="left:1576px;top:1610px;width:38px;height:24px;background:#dc3545;border-radius:7px"></div><span class="t" style="left:1585.0px;top:1612.3px;font-size:14px;line-height:20px;letter-spacing:1.30px;font-weight:bold;color:#fff;">No</span><div class="dots" style="left:1772.4px;top:1608px;width:5.5px;height:5.5px;"></div>
<div class="b" style="left:364px;top:1754px;width:1499px;height:1px;background:#e3e3e3"></div><div class="cb" style="left:378px;top:1693px;width:26px;height:25.5px;"></div><span class="t" style="left:515.3px;top:1697.7px;font-size:18px;line-height:25px;color:#737373;">15</span><span class="t" style="left:708.2px;top:1697.7px;font-size:17.8px;line-height:25px;letter-spacing:0.80px;color:#737373;">Barbados Dollar</span><span class="t" style="left:1034.9px;top:1697.7px;font-size:17.6px;line-height:25px;letter-spacing:-0.20px;color:#737373;">BBD</span><span class="t" style="left:1220.0px;top:1697.7px;font-size:18px;line-height:25px;color:#737373;">$</span><div class="b" style="left:1380px;top:1699px;width:63px;height:24px;background:#198754;border-radius:7px"></div><span class="t" style="left:1388.4px;top:1701.3px;font-size:14px;line-height:20px;letter-spacing:0.79px;font-weight:bold;color:#fff;">Active</span><div class="b" style="left:1576px;top:1699px;width:38px;height:24px;background:#dc3545;border-radius:7px"></div><span class="t" style="left:1585.0px;top:1701.3px;font-size:14px;line-height:20px;letter-spacing:1.30px;font-weight:bold;color:#fff;">No</span><div class="dots" style="left:1772.4px;top:1697px;width:5.5px;height:5.5px;"></div>
<div class="b" style="left:364px;top:1843px;width:1499px;height:1px;background:#e3e3e3"></div><div class="cb" style="left:378px;top:1782px;width:26px;height:25.5px;"></div><span class="t" style="left:515.3px;top:1787.1px;font-size:18px;line-height:25px;color:#737373;">16</span><span class="t" style="left:705.3px;top:1787.1px;font-size:17.8px;line-height:25px;letter-spacing:0.62px;color:#737373;">Belarusian Ruble</span><span class="t" style="left:1035.3px;top:1787.1px;font-size:17.6px;line-height:25px;letter-spacing:-0.60px;color:#737373;">BYN</span><span class="t" style="left:1215.4px;top:1787.1px;font-size:18px;line-height:25px;letter-spacing:1.12px;color:#737373;">Br</span><div class="b" style="left:1380px;top:1789px;width:63px;height:24px;background:#198754;border-radius:7px"></div><span class="t" style="left:1388.4px;top:1791.3px;font-size:14px;line-height:20px;letter-spacing:0.79px;font-weight:bold;color:#fff;">Active</span><div class="b" style="left:1576px;top:1789px;width:38px;height:24px;background:#dc3545;border-radius:7px"></div><span class="t" style="left:1585.0px;top:1791.3px;font-size:14px;line-height:20px;letter-spacing:1.30px;font-weight:bold;color:#fff;">No</span><div class="dots" style="left:1772.4px;top:1787px;width:5.5px;height:5.5px;"></div>
<div class="b" style="left:364px;top:1933px;width:1499px;height:1px;background:#e3e3e3"></div><div class="cb" style="left:378px;top:1871px;width:26px;height:25.5px;"></div><span class="t" style="left:515.3px;top:1876.5px;font-size:18px;line-height:25px;color:#737373;">17</span><span class="t" style="left:724.7px;top:1876.5px;font-size:17.8px;line-height:25px;letter-spacing:0.50px;color:#737373;">Belize Dollar</span><span class="t" style="left:1035.3px;top:1876.5px;font-size:17.6px;line-height:25px;letter-spacing:-0.11px;color:#737373;">BZD</span><span class="t" style="left:1220.0px;top:1876.5px;font-size:18px;line-height:25px;color:#737373;">$</span><div class="b" style="left:1380px;top:1878px;width:63px;height:24px;background:#198754;border-radius:7px"></div><span class="t" style="left:1388.4px;top:1880.3px;font-size:14px;line-height:20px;letter-spacing:0.79px;font-weight:bold;color:#fff;">Active</span><div class="b" style="left:1576px;top:1878px;width:38px;height:24px;background:#dc3545;border-radius:7px"></div><span class="t" style="left:1585.0px;top:1880.3px;font-size:14px;line-height:20px;letter-spacing:1.30px;font-weight:bold;color:#fff;">No</span><div class="dots" style="left:1772.4px;top:1876px;width:5.5px;height:5.5px;"></div>
<div class="b" style="left:364px;top:2022px;width:1499px;height:1px;background:#e3e3e3"></div><div class="cb" style="left:378px;top:1961px;width:26px;height:25.5px;"></div><span class="t" style="left:515.3px;top:1965.9px;font-size:18px;line-height:25px;color:#737373;">18</span><span class="t" style="left:710.1px;top:1965.9px;font-size:17.8px;line-height:25px;letter-spacing:0.89px;color:#737373;">Bermuda Dollar</span><span class="t" style="left:1032.4px;top:1965.9px;font-size:17.6px;line-height:25px;letter-spacing:0.84px;color:#737373;">BMD</span><span class="t" style="left:1220.0px;top:1965.9px;font-size:18px;line-height:25px;color:#737373;">$</span><div class="b" style="left:1380px;top:1967px;width:63px;height:24px;background:#198754;border-radius:7px"></div><span class="t" style="left:1388.4px;top:1969.3px;font-size:14px;line-height:20px;letter-spacing:0.79px;font-weight:bold;color:#fff;">Active</span><div class="b" style="left:1576px;top:1967px;width:38px;height:24px;background:#dc3545;border-radius:7px"></div><span class="t" style="left:1585.0px;top:1969.3px;font-size:14px;line-height:20px;letter-spacing:1.30px;font-weight:bold;color:#fff;">No</span><div class="dots" style="left:1772.4px;top:1966px;width:5.5px;height:5.5px;"></div>
<div class="b" style="left:364px;top:2111px;width:1499px;height:1px;background:#e3e3e3"></div><div class="cb" style="left:378px;top:2050px;width:26px;height:25.5px;"></div><span class="t" style="left:515.3px;top:2055.2px;font-size:18px;line-height:25px;color:#737373;">19</span><span class="t" style="left:703.6px;top:2055.2px;font-size:17.8px;line-height:25px;letter-spacing:1.04px;color:#737373;">Bhutan Ngultrum</span><span class="t" style="left:1035.3px;top:2055.2px;font-size:17.6px;line-height:25px;letter-spacing:-0.11px;color:#737373;">BTN</span><span class="t" style="left:1210.8px;top:2055.2px;font-size:18px;line-height:25px;letter-spacing:0.15px;color:#737373;">Nu.</span><div class="b" style="left:1380px;top:2057px;width:63px;height:24px;background:#198754;border-radius:7px"></div><span class="t" style="left:1388.4px;top:2059.3px;font-size:14px;line-height:20px;letter-spacing:0.79px;font-weight:bold;color:#fff;">Active</span><div class="b" style="left:1576px;top:2057px;width:38px;height:24px;background:#dc3545;border-radius:7px"></div><span class="t" style="left:1585.0px;top:2059.3px;font-size:14px;line-height:20px;letter-spacing:1.30px;font-weight:bold;color:#fff;">No</span><div class="dots" style="left:1772.4px;top:2055px;width:5.5px;height:5.5px;"></div>
<div class="b" style="left:364px;top:2201px;width:1499px;height:1px;background:#e3e3e3"></div><div class="cb" style="left:378px;top:2139px;width:26px;height:25.5px;"></div><span class="t" style="left:515.3px;top:2144.6px;font-size:18px;line-height:25px;color:#737373;">20</span><span class="t" style="left:707.5px;top:2144.6px;font-size:17.8px;line-height:25px;letter-spacing:0.67px;color:#737373;">Bolivia Boliviano</span><span class="t" style="left:1034.1px;top:2144.6px;font-size:17.6px;line-height:25px;letter-spacing:0.16px;color:#737373;">BOB</span><span class="t" style="left:1212.1px;top:2144.6px;font-size:18px;line-height:25px;letter-spacing:-0.09px;color:#737373;">Bs.</span><div class="b" style="left:1380px;top:2146px;width:63px;height:24px;background:#198754;border-radius:7px"></div><span class="t" style="left:1388.4px;top:2148.3px;font-size:14px;line-height:20px;letter-spacing:0.79px;font-weight:bold;color:#fff;">Active</span><div class="b" style="left:1576px;top:2146px;width:38px;height:24px;background:#dc3545;border-radius:7px"></div><span class="t" style="left:1585.0px;top:2148.3px;font-size:14px;line-height:20px;letter-spacing:1.30px;font-weight:bold;color:#fff;">No</span><div class="dots" style="left:1772.4px;top:2144px;width:5.5px;height:5.5px;"></div>
<div class="b" style="left:1579px;top:479px;width:270px;height:50px;background:#fff;border-radius:9px;box-shadow:0 0 9px rgba(0,0,0,0.07)"></div><svg style="left:1599.5px;top:492px" width="21" height="21" viewBox="0 0 22 22" fill="none" ><path d="M13.6 1.9 Q15.6 0.1 17.6 1.9 L19.5 3.8 Q21.2 5.7 19.4 7.6 L6.9 19.4 L0.7 20.1 L1.3 14.1 Z" stroke="#858585" stroke-width="1.45" stroke-linecap="round" stroke-linejoin="round" /><path d="M12.9 4.2 L16.9 8.2 M7.1 12.9 L13.9 6.1" stroke="#858585" stroke-width="1.35" stroke-linecap="round" stroke-linejoin="round" /><path d="M1.5 14.2 Q4.1 14.5 4.4 16.6 Q6.4 16.8 6.7 19.2" stroke="#858585" stroke-width="1.25" stroke-linecap="round" stroke-linejoin="round" /></svg><span class="t" style="left:1635.5px;top:489.7px;font-size:19.4px;line-height:27px;letter-spacing:1.07px;color:#8a8a8a;">Edit</span>
<span class="t" style="left:364.3px;top:2233.6px;font-size:18.6px;line-height:24px;color:#374151;letter-spacing:0.13px">Showing <b>1</b> to <b>20</b> of <b>151</b> results</span><div class="b" style="left:1324px;top:2223px;width:539px;height:46px;background:#f3f5f4;border-radius:23px"></div><svg style="left:1344px;top:2236px" width="14" height="20" viewBox="0 0 14 20" fill="none" ><path d="M9.900 2.600 L2.500 10 L9.900 17.400" stroke="#696a73" stroke-width="2.4" stroke-linecap="round" stroke-linejoin="round" /></svg><div class="b" style="left:1385px;top:2226px;width:41px;height:41px;background:#00917d;border-radius:50%"></div><span class="t" style="left:1399.4px;top:2231.6px;font-size:21.6px;line-height:30px;color:#fff;">1</span><span class="t" style="left:1451.3px;top:2231.6px;font-size:21.6px;line-height:30px;color:#72747c;">2</span><span class="t" style="left:1505.3px;top:2231.6px;font-size:21.6px;line-height:30px;color:#72747c;">3</span><span class="t" style="left:1558.9px;top:2231.6px;font-size:21.6px;line-height:30px;color:#72747c;">4</span><span class="t" style="left:1612.9px;top:2231.6px;font-size:21.6px;line-height:30px;color:#72747c;">5</span><span class="t" style="left:1666.8px;top:2231.6px;font-size:21.6px;line-height:30px;color:#72747c;">6</span><span class="t" style="left:1720.0px;top:2231.6px;font-size:21.6px;line-height:30px;color:#72747c;">7</span><span class="t" style="left:1774.7px;top:2231.6px;font-size:21.6px;line-height:30px;color:#72747c;">8</span><svg style="left:1829.2px;top:2236px" width="14" height="20" viewBox="0 0 14 20" fill="none" ><path d="M4.100 2.600 L11.500 10 L4.100 17.400" stroke="#696a73" stroke-width="2.4" stroke-linecap="round" stroke-linejoin="round" /></svg>
<span class="t" style="left:339.5px;top:2364.1px;font-size:18px;line-height:25px;letter-spacing:0.80px;color:#6b6b6b;">© 2025 Acnoo, All rights reserved.</span><span class="t" style="left:1674.2px;top:2362.7px;font-size:18.7px;line-height:26px;letter-spacing:0.57px;color:#6b6b6b;">Developed by</span><svg style="left:1801.6px;top:2364.8px" width="22" height="20" viewBox="0 0 22 20" fill="none" ><path d="M11 18.500 C4.500 13.500 1.300 10.500 1.300 6.300 C1.300 3.300 3.500 1.200 6.200 1.200 C8.300 1.200 10 2.300 11 4 C12 2.300 13.700 1.200 15.800 1.200 C18.500 1.200 20.700 3.300 20.700 6.300 C20.700 10.500 17.500 13.500 11 18.500 Z" fill="#e81c2a" stroke="#1c0507" stroke-width="1.300"/><path d="M4.500 5.500 Q5 3.800 6.800 3.600" stroke="#ff8a8f" stroke-width="1.100" stroke-linecap="round"/></svg><span class="t" style="left:1830.4px;top:2362.7px;font-size:18.9px;line-height:26px;letter-spacing:1.08px;color:#00917d;">Acnoo</span>
</body></html>
